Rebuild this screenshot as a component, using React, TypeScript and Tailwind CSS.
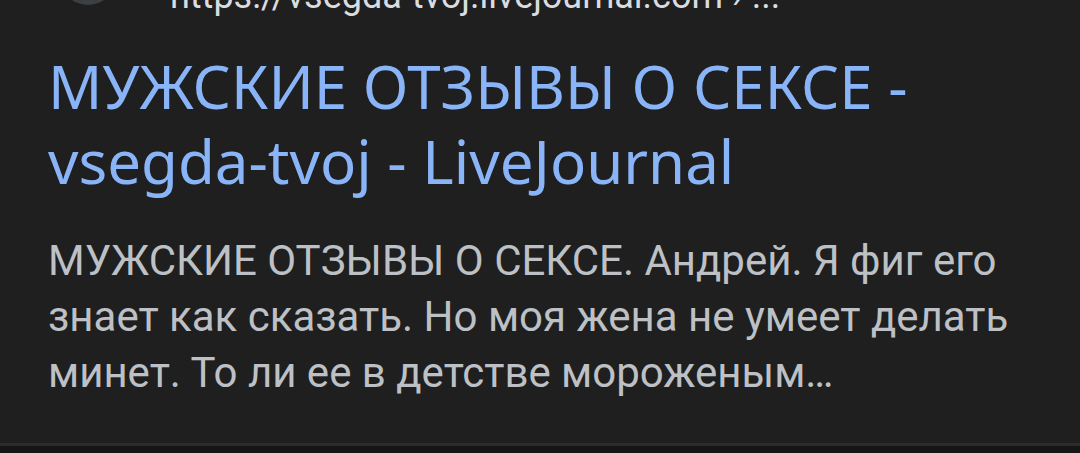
export default function App() {
  return (
    <div className="flex h-[453px] w-[1080px] flex-col overflow-hidden bg-[#1f1f1f]">
      <div className="flex-1 pl-[48px] pr-[40px]">
        {/* site row, mostly scrolled out of view */}
        <div className="-mt-[42px] flex h-[56px] items-end">
          <div className="mb-[9px] ml-[12px] h-[56px] w-[56px] shrink-0 rounded-full bg-[#3c4043]" />
          <span className="ml-[54px] font-['Roboto',sans-serif] text-[36px] leading-[36px] whitespace-nowrap text-[#dadce0]">
            https://vsegda-tvoj.livejournal.com › ...
          </span>
        </div>
        <h3 className="mt-[35px] font-['Noto_Sans',sans-serif] text-[60px] leading-[75px] font-normal text-[#8ab4f8]">
          МУЖСКИЕ ОТЗЫВЫ О СЕКСЕ - vsegda-tvoj - LiveJournal
        </h3>
        <p className="mt-[34px] font-['Roboto',sans-serif] text-[42px] leading-[56px] text-[#bdc1c6]">
          МУЖСКИЕ ОТЗЫВЫ О СЕКСЕ. Андрей. Я фиг его знает как сказать. Но моя жена не умеет делать минет. То ли ее в детстве мороженым…
        </p>
      </div>
      <div className="h-[3px] bg-[#2b2c30]" />
      <div className="h-[7px] bg-[#161616]" />
    </div>
  );
}
